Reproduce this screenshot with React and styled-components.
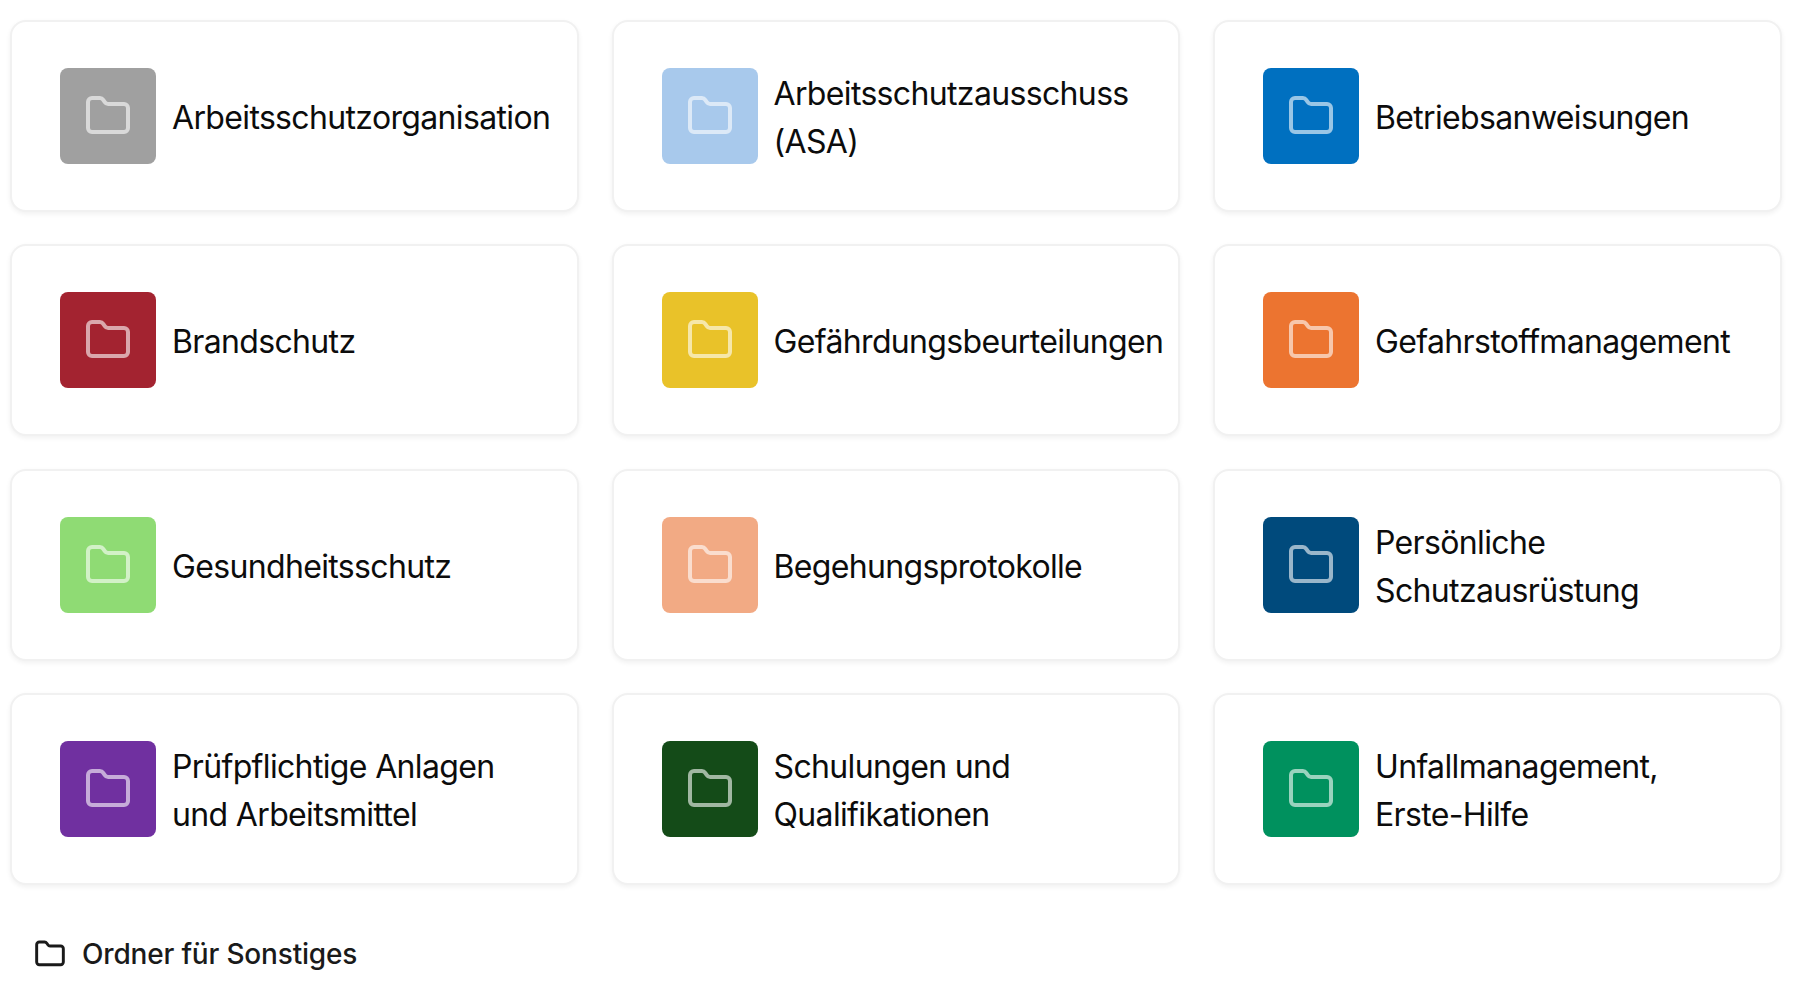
import React from 'react';
import styled, {createGlobalStyle} from "styled-components";

const Global = createGlobalStyle`
  html, body {
    margin: 0;
    padding: 0;
    background: #FFFFFF;
  }
  body {
    font-family: Inter, "Liberation Sans", sans-serif;
    color: #111111;
  }
`
const Page = styled.div`
  padding: 20px 16.5px 0 10px;
`
const Grid = styled.div`
  display: grid;
  grid-template-columns: repeat(3, minmax(0, 1fr));
  gap: 32.4px 33px;
`
const Card = styled.div`
  box-sizing: border-box;
  height: 192px;
  display: flex;
  align-items: center;
  gap: 16px;
  padding: 0 16px 0 48px;
  background: #FFFFFF;
  border: 2px solid #F1F1F1;
  border-radius: 16px;
  box-shadow: 0 2px 5px rgba(0, 0, 0, 0.06);
`
const IconBox = styled.div`
  flex: none;
  width: 96px;
  height: 96px;
  display: flex;
  align-items: center;
  justify-content: center;
  border-radius: 8px;
  background: ${props => props.$color};
  color: rgba(255, 255, 255, 0.6);
`
const Label = styled.div`
  max-width: 380px;
  padding-top: 4px;
  font-size: 32px;
  line-height: 48px;
  letter-spacing: -0.65px;
  text-wrap: balance;
  color: #0C0C0C;
`
const Other = styled.div`
  display: flex;
  align-items: center;
  gap: 16px;
  margin: 49px 0 0 24px;
  font-size: 28px;
  line-height: 40px;
  font-weight: 500;
  letter-spacing: -0.18px;
  color: #1A1A1A;
`
const Folder = ({size = 48, stroke = 2}) => (
    <svg width={size} height={size} viewBox="0 0 24 24" fill="none" stroke="currentColor"
         strokeWidth={stroke} strokeLinecap="round" strokeLinejoin="round">
        <path d="M4 20h16a2 2 0 0 0 2-2V8a2 2 0 0 0-2-2h-7.9a2 2 0 0 1-1.7-.9l-.8-1.2A2 2 0 0 0 7.9 3H4a2 2 0 0 0-2 2v13a2 2 0 0 0 2 2Z"/>
    </svg>
)

const folders = [
    {name: "Arbeitsschutzorganisation", color: "#A0A0A0"},
    {name: "Arbeitsschutzausschuss (ASA)", color: "#A8C9EC"},
    {name: "Betriebsanweisungen", color: "#0070C0"},
    {name: "Brandschutz", color: "#A32330"},
    {name: "Gefährdungsbeurteilungen", color: "#E9C229"},
    {name: "Gefahrstoffmanagement", color: "#EC7430"},
    {name: "Gesundheitsschutz", color: "#8FDB74"},
    {name: "Begehungsprotokolle", color: "#F2AA84"},
    {name: "Persönliche Schutzausrüstung", color: "#004A7C"},
    {name: "Prüfpflichtige Anlagen und Arbeitsmittel", color: "#7030A0"},
    {name: "Schulungen und Qualifikationen", color: "#144B18"},
    {name: "Unfallmanagement, Erste-Hilfe", color: "#00915E"},
];

const App = () => (
    <Page>
        <Global/>
        <Grid>
            {folders.map(folder => (
                <Card key={folder.name}>
                    <IconBox $color={folder.color}><Folder/></IconBox>
                    <Label>{folder.name}</Label>
                </Card>
            ))}
        </Grid>
        <Other>
            <Folder size={32} stroke={2.2}/>
            Ordner für Sonstiges
        </Other>
    </Page>
);

export default App;
